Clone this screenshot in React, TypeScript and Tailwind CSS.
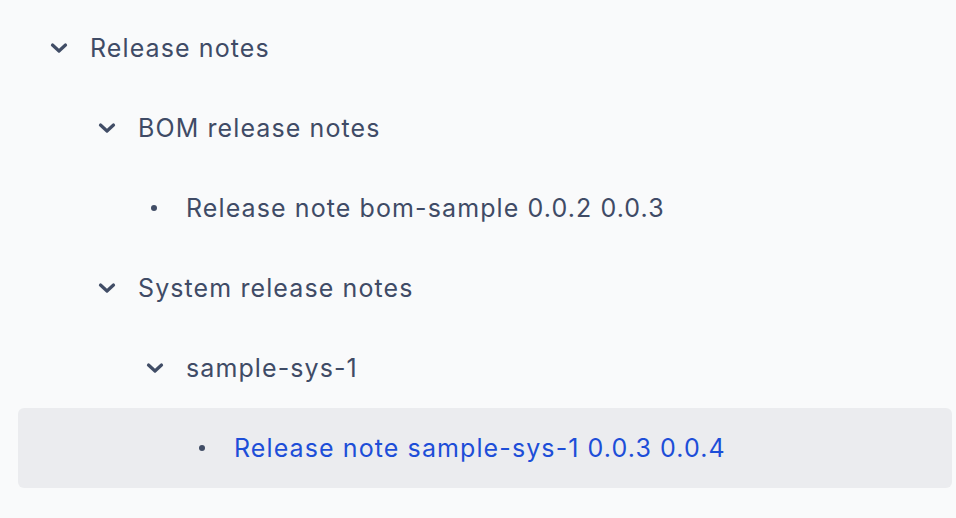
import React from "react";

type Node = { label: string; level: number; kind: "branch" | "leaf"; active?: boolean };

const rows: Node[] = [
  { label: "Release notes", level: 0, kind: "branch" },
  { label: "BOM release notes", level: 1, kind: "branch" },
  { label: "Release note bom-sample 0.0.2 0.0.3", level: 2, kind: "leaf" },
  { label: "System release notes", level: 1, kind: "branch" },
  { label: "sample-sys-1", level: 2, kind: "branch" },
  { label: "Release note sample-sys-1 0.0.3 0.0.4", level: 3, kind: "leaf", active: true },
  { label: "sample-sys-2", level: 2, kind: "branch" },
];

const pad = ["pl-[32px]", "pl-[80px]", "pl-[128px]", "pl-[176px]"];

function Chevron() {
  return (
    <svg width="18" height="12" viewBox="0 0 18 12" className="text-[#414d66]">
      <path d="M2.5 3 L9 9 L15.5 3" fill="none" stroke="currentColor" strokeWidth="3.2" strokeLinecap="round" strokeLinejoin="round" />
    </svg>
  );
}

export default function App() {
  return (
    <div className="w-full bg-[#f9fafb] overflow-hidden" style={{ height: 518 }}>
      <ul className="pl-[18px] pr-[4px] pt-[8px] [font-family:Inter,'Noto_Sans',sans-serif]">
        {rows.map((r, i) => (
          <li
            key={i}
            className={`flex h-20 items-center rounded-md ${pad[r.level]} ${r.active ? "bg-[#ebecef]" : ""}`}
          >
            <span className="flex w-10 shrink-0 items-center">
              {r.kind === "branch" ? (
                <Chevron />
              ) : (
                <span className="ml-[5px] block h-[6px] w-[6px] rounded-full bg-[#414d66]" />
              )}
            </span>
            <span
              className={`whitespace-nowrap text-[25px] leading-none tracking-[1.1px] ${r.active ? "text-[#1d4ed8]" : "text-[#3f4b66]"}`}
            >
              {r.label}
            </span>
          </li>
        ))}
      </ul>
    </div>
  );
}
